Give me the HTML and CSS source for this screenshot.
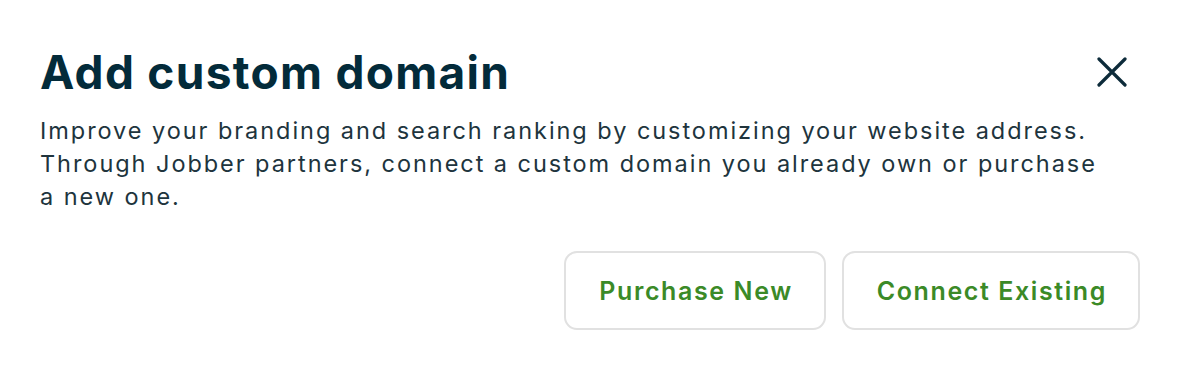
FILE: index.html
```html
<!DOCTYPE html>
<html lang="en">
<head>
<meta charset="utf-8">
<title>Add custom domain</title>
<link rel="stylesheet" href="styles.css">
</head>
<body>
<div class="dialog">
  <div class="header">
    <h1 class="title">Add custom domain</h1>
    <button class="close" aria-label="Close">
      <svg width="30" height="30" viewBox="0 0 30 30"><path d="M2 2 L28 28 M28 2 L2 28" stroke="#0d2b3a" stroke-width="3.2" stroke-linecap="round" fill="none"/></svg>
    </button>
  </div>
  <p class="desc">Improve your branding and search ranking by customizing your website address. Through Jobber partners, connect a custom domain you already own or purchase a new one.</p>
  <div class="actions">
    <button class="btn">Purchase New</button>
    <button class="btn">Connect Existing</button>
  </div>
</div>
</body>
</html>
```

FILE: styles.css
```css
* { box-sizing: border-box; }
html, body { margin: 0; padding: 0; background: #fff; }
body { font-family: Inter, "Noto Sans", sans-serif; }
.dialog {
  width: 1180px;
  padding: 40px 40px 0 40px;
}
.header {
  display: flex;
  align-items: center;
  justify-content: space-between;
}
.title {
  margin: 0;
  font-size: 46px;
  font-weight: 700;
  line-height: 64px;
  letter-spacing: 1.3px;
  color: #032b3a;
}
.close {
  width: 40px;
  height: 40px;
  margin-right: 8px;
  border: 0;
  background: none;
  padding: 0;
  display: flex;
  align-items: center;
  justify-content: center;
}
.desc {
  margin: 10px 0 0 0;
  font-size: 23.5px;
  line-height: 33px;
  letter-spacing: 1.95px;
  color: #20343d;
  max-width: 1065px;
}
.actions {
  display: flex;
  justify-content: flex-end;
  gap: 16px;
  margin-top: 38px;
}
.btn {
  height: 79px;
  padding: 0 31px 0 33px;
  border: 2px solid #e1e1e1;
  border-radius: 13px;
  background: #fff;
  font-family: Inter, sans-serif;
  font-size: 25px;
  font-weight: 600;
  letter-spacing: 1.6px;
  color: #3b8a27;
}
```
